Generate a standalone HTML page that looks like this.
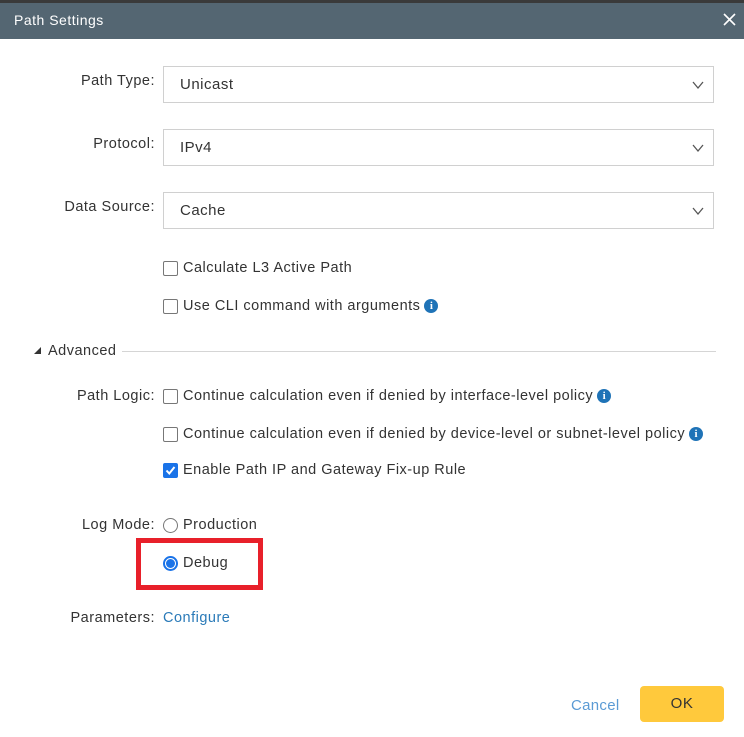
<!DOCTYPE html>
<html><head><style>
body{margin:0;width:744px;height:737px;background:#fff;font-family:"Liberation Sans",sans-serif;font-size:14.5px;letter-spacing:0.5px;color:#333;position:relative;overflow:hidden}
.a{position:absolute;white-space:nowrap}
.lbl{position:absolute;right:589px;white-space:nowrap;line-height:16px}
.sel{position:absolute;left:163px;width:549px;height:35px;border:1px solid #d0d0d0;box-sizing:content-box}
.sel span{position:absolute;left:16px;top:9px;font-size:15px;color:#333}
.sel svg{position:absolute;right:8px;top:13px}
.cb{position:absolute;left:163px;width:13px;height:13px;border:1px solid #777;border-radius:2px;background:#fff}
.txt{position:absolute;left:183px;white-space:nowrap;line-height:16px}
.i{display:inline-block;width:14px;height:14px;border-radius:50%;background:#1f73b7;color:#fff;font-size:11px;font-weight:bold;text-align:center;line-height:14px;vertical-align:top;margin-top:1px;margin-left:4px;letter-spacing:0;font-family:"Liberation Serif",serif}
</style></head><body>
<div class="a" style="left:0;top:0;width:744px;height:3px;background:#3a3a3a"></div>
<div class="a" style="left:0;top:3px;width:744px;height:36px;background:#546672"></div>
<div class="a" style="left:14px;top:12px;color:#fff;font-size:14px">Path Settings</div>
<svg class="a" style="left:723px;top:13px" width="13" height="13"><path d="M1 1L12 12M12 1L1 12" stroke="#fff" stroke-width="1.6"/></svg>

<div class="lbl" style="top:73px">Path Type:</div>
<div class="sel" style="top:66px"><span>Unicast</span><svg width="14" height="10"><path d="M2 2L7 8L12 2" stroke="#555" fill="none" stroke-width="1.3"/></svg></div>
<div class="lbl" style="top:136px">Protocol:</div>
<div class="sel" style="top:129px"><span>IPv4</span><svg width="14" height="10"><path d="M2 2L7 8L12 2" stroke="#555" fill="none" stroke-width="1.3"/></svg></div>
<div class="lbl" style="top:199px">Data Source:</div>
<div class="sel" style="top:192px"><span>Cache</span><svg width="14" height="10"><path d="M2 2L7 8L12 2" stroke="#555" fill="none" stroke-width="1.3"/></svg></div>

<div class="cb" style="top:261px"></div><div class="txt" style="top:260px">Calculate L3 Active Path</div>
<div class="cb" style="top:299px"></div><div class="txt" style="top:298px">Use CLI command with arguments<span class="i">i</span></div>

<svg class="a" style="left:34px;top:347px" width="8" height="8"><path d="M7 0L7 7L0 7Z" fill="#333"/></svg>
<div class="a" style="left:48px;top:343px;line-height:16px">Advanced</div>
<div class="a" style="left:122px;top:351px;width:594px;height:1px;background:#d5d5d5"></div>

<div class="lbl" style="top:388px">Path Logic:</div>
<div class="cb" style="top:389px"></div><div class="txt" style="top:388px">Continue calculation even if denied by interface-level policy<span class="i">i</span></div>
<div class="cb" style="top:427px"></div><div class="txt" style="top:426px">Continue calculation even if denied by device-level or subnet-level policy<span class="i">i</span></div>
<div class="cb" style="top:463px;background:#1a73e8;border-color:#1a73e8"><svg width="13" height="13" style="position:absolute;left:0;top:0"><path d="M2.5 6.5L5.3 9.5L10.5 3" stroke="#fff" stroke-width="2" fill="none"/></svg></div>
<div class="txt" style="top:462px">Enable Path IP and Gateway Fix-up Rule</div>

<div class="lbl" style="top:517px">Log Mode:</div>
<div class="a" style="left:163px;top:518px;width:13px;height:13px;border:1px solid #777;border-radius:50%"></div>
<div class="txt" style="top:517px">Production</div>
<div class="a" style="left:136px;top:538px;width:117px;height:42px;border:5px solid #e8202a"></div>
<div class="a" style="left:163px;top:556px;width:11px;height:11px;border:2px solid #1a73e8;border-radius:50%;background:#fff"></div>
<div class="a" style="left:166px;top:559px;width:9px;height:9px;border-radius:50%;background:#1a73e8"></div>
<div class="txt" style="top:555px">Debug</div>

<div class="lbl" style="top:610px">Parameters:</div>
<div class="txt" style="left:163px;top:610px;color:#2a7ab8">Configure</div>

<div class="a" style="left:571px;top:697px;color:#5b9bd5;font-size:15px;letter-spacing:0.3px">Cancel</div>
<div class="a" style="left:640px;top:686px;width:84px;height:36px;background:#ffc93c;border-radius:4px;text-align:center;line-height:36px;font-size:15px;color:#333">OK</div>
</body></html>
